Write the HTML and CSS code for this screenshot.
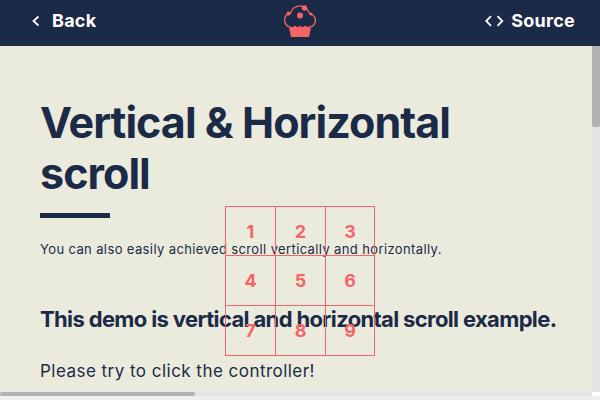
FILE: index.html
```html
<!DOCTYPE html>
<html lang="en">
<head>
<meta charset="utf-8">
<title>Vertical &amp; Horizontal scroll</title>
<link rel="stylesheet" href="styles.css">
</head>
<body>
<header class="header">
  <a class="link back"><svg width="8" height="12" viewBox="0 0 8 12"><path d="M6.5 1.5 1.5 6l5 4.5"/></svg><span>Back</span></a>
  <svg class="logo" width="34" height="34" viewBox="0 0 34 34">
    <path class="outline" d="M7 23C0 21 0 11 6 10C8 10 8 8 9 6C12 1 21 1 24 5C26 8 26 10 28 10C34 13 34 21 27 23C25 24 23 23 22 22.5C20 24 18 23.5 17 22.5C15 24 13 23.5 12 22.5C10 24 8 24 7 23Z"/>
    <path class="fill" d="M6 23.5L12 23L17 23.5L22 23L28 23.5L26 33H8Z"/>
    <circle class="fill" cx="17" cy="11.5" r="3"/><circle class="fill" cx="21.5" cy="4" r="2.7"/><circle class="fill" cx="5.5" cy="9.5" r="2"/><circle class="fill" cx="28" cy="10" r="1.5"/>
  </svg>
  <a class="link source"><svg width="19" height="12" viewBox="0 0 19 12"><path d="M6 1.2 1.2 6 6 10.8M12.5 1.2 17.3 6 12.5 10.8"/></svg><span>Source</span></a>
</header>
<div class="viewer">
  <main class="content">
    <h1>Vertical &amp; Horizontal<br>scroll</h1>
    <div class="rule"></div>
    <p class="description">You can also easily achieved scroll vertically and horizontally.</p>
    <h2>This demo is vertical and horizontal scroll example.</h2>
    <p class="hint">Please try to click the controller!</p>
  </main>
  <div class="track-y"><div class="thumb-y"></div></div>
  <div class="track-x"><div class="thumb-x"></div></div>
  <div class="corner"></div>
</div>
<nav class="controller"><b>1</b><b>2</b><b>3</b><b>4</b><b>5</b><b>6</b><b>7</b><b>8</b><b>9</b></nav>
</body>
</html>
```
FILE: styles.css
```css
* { box-sizing: border-box; }
body { margin: 0; height: 400px; overflow: hidden; background: #eee; color: #1b2a47; font-family: Inter, "Liberation Sans", sans-serif; position: relative; }
.header { height: 46px; background: #1b2a47; display: grid; grid-template-columns: 1fr 34px 1fr; padding: 0 25px 0 32px; color: #fff; }
.link { display: flex; align-items: center; height: 41px; font-size: 18px; font-weight: 700; white-space: nowrap; letter-spacing: .25px; }
.link svg { fill: none; stroke: #fff; stroke-width: 1.8; }
.back { gap: 12px; }
.source { gap: 7px; justify-content: flex-end; }
.logo { margin: 4px 0 0 -4px; }
.outline { fill: none; stroke: #f56565; stroke-width: 1.3; }
.fill { fill: #f56565; }
.viewer { display: grid; grid-template: 346px 4px / 592px 8px; }
.content { background: #eaebdd; padding: 51px 0 0 40px; overflow: hidden; white-space: nowrap; }
h1 { margin: 0; font-size: 43px; line-height: 51px; font-weight: 700; letter-spacing: -.95px; }
.rule { width: 70px; height: 5px; background: #1b2a47; margin-top: 14px; }
.description { margin: 21px 0 0; font-size: 13px; line-height: 20px; letter-spacing: .38px; }
h2 { margin: 45px 0 0; font-size: 22px; line-height: 30px; font-weight: 700; letter-spacing: -.64px; }
.hint { margin: 25px 0 0; font-size: 17px; line-height: 24px; letter-spacing: .47px; }
.track-y, .track-x { background: #e4e4e4; }
.thumb-y { height: 81px; background: #b1b3b2; border-radius: 0 0 2px 2px; }
.thumb-x { width: 195px; height: 4px; background: #b1b3b2; border-radius: 2px; }
.corner { background: #fff; }
.controller { position: absolute; left: 225px; top: 206px; width: 150px; height: 150px; display: grid; grid-template: 49px 50px 50px / 50px 50px 49px; border: solid #f56565; border-width: 1px 0 0 1px; color: #f56565; font-size: 18px; }
.controller b { display: flex; align-items: center; justify-content: center; border: solid #f56565; border-width: 0 1px 1px 0; }
```
